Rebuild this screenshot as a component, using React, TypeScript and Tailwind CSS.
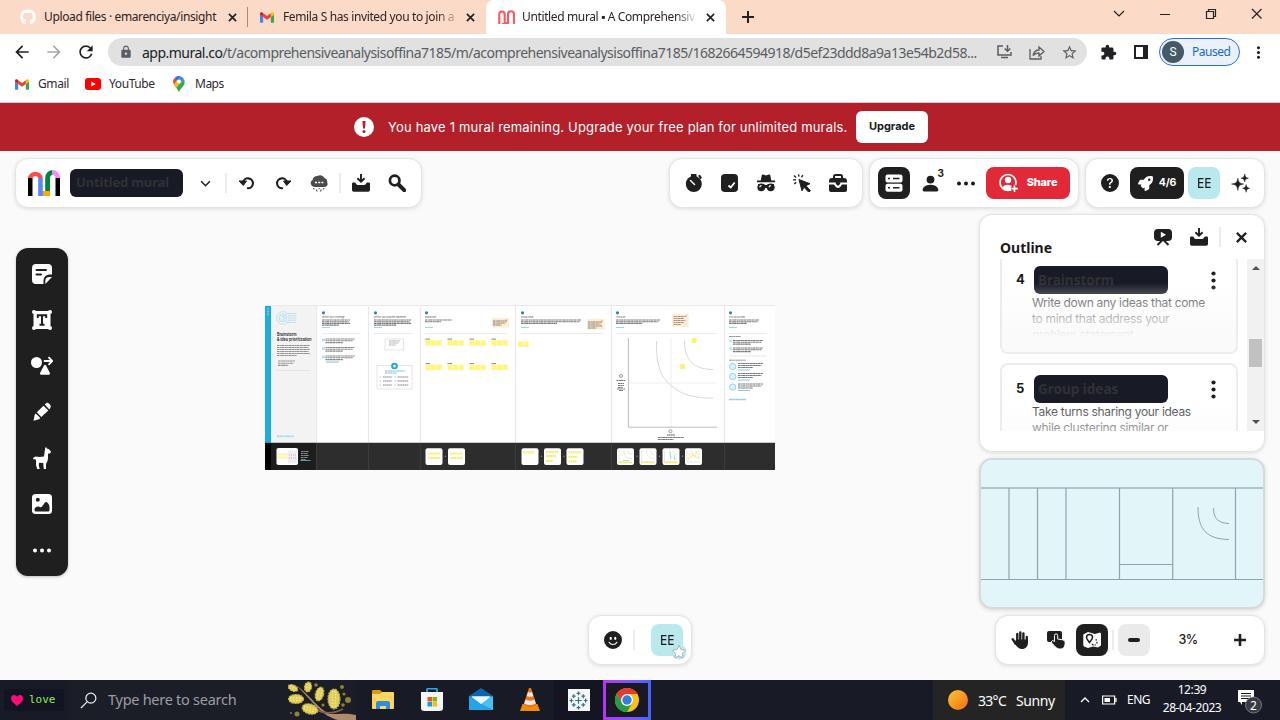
import React from "react";
import { FaGithub, FaRocket } from "react-icons/fa";
import { MdArrowBack, MdArrowForward, MdRefresh, MdLock, MdExtension, MdStarBorder, MdMoreVert } from "react-icons/md";
import { BsPersonFill, BsQuestionCircleFill, BsEmojiSmileFill } from "react-icons/bs";

type P = { className?: string };
const card = "bg-white rounded-[13px] border border-[#e4e4e4] shadow-[0_1px_4px_rgba(0,0,0,0.12)]";

const Gmail = ({ className }: P) => (
  <svg viewBox="0 0 16 12" className={className}>
    <path d="M1 12h2.6V5.2L0 2.7V11a1 1 0 0 0 1 1z" fill="#4285f4" />
    <path d="M12.4 12H15a1 1 0 0 0 1-1V2.7l-3.6 2.5z" fill="#34a853" />
    <path d="M12.4 1v4.4L16 2.7V1.6C16 .2 14.4-.5 13.300.3z" fill="#fbbc04" />
    <path d="M3.600 5.400V1L8 4.300 12.400 1v4.400L8 8.700z" fill="#ea4335" />
    <path d="M0 1.600v1.100l3.600 2.700V1L2.700.3C1.600-.5 0 .2 0 1.600z" fill="#c5221f" />
  </svg>
);
const MuralTab = () => (
  <svg viewBox="0 0 18 14" className="h-[14px] w-[18px]" fill="none" stroke="#f9595f" strokeWidth="2.100">
    <path d="M1.300 14V4.200a2.700 2.700 0 0 1 5.400 0V13M6.300 13H10V4.200a3 3 0 0 1 6 0V14M4 14h2.700" />
  </svg>
);
const Close = ({ className }: P) => (
  <svg viewBox="0 0 10 10" className={className}><path d="m1 1 8 8M9 1 1 9" stroke="#222" strokeWidth="1.900" /></svg>
);
const Pin = () => (
  <svg viewBox="0 0 12 16" className="h-4 w-3">
    <path d="M6 0a5.700 5.700 0 0 0-4.400 2L4 4.500 8 .4A5.600 5.600 0 0 0 6 0z" fill="#1a73e8" />
    <path d="M1.600 2A5.500 5.500 0 0 0 1 8.500L4 4.500z" fill="#ea4335" />
    <path d="M8 .4 4 4.500l-3 4C1.500 9.600 2.400 10.700 3.200 11.800L11 3.200A5.700 5.700 0 0 0 8 .4z" fill="#4285f4" />
    <path d="M1 8.500c.5 1.100 1.400 2.200 2.200 3.300L8 6.500 4 4.500z" fill="#fbbc04" />
    <path d="M11 3.200 3.200 11.800C4.400 13.400 5 14.500 6 16c1.200-3.500 5.700-6 5.700-10.300 0-.9-.3-1.800-.7-2.500z" fill="#34a853" />
    <circle cx="6" cy="5.600" r="2" fill="#fff" />
  </svg>
);
const MuralLogo = () => (
  <svg viewBox="0 0 32 26" className="h-[26px] w-8">
    <path d="M0 8h4.500v18H0zM27.500 8H32v18h-4.500z" fill="#000" />
    <path d="M0 8a7.500 7.500 0 0 1 14.800 0h-4.600a3 3 0 0 0-5.700 0z" fill="#ff4b4b" />
    <path d="M10.200 8h4.600v13H15v5h-4.800z" fill="#5887ff" />
    <path d="M15 21h7v5h-7z" fill="#ffa800" />
    <path d="M17.200 21V8A7.600 7.600 0 0 1 24.500 0v4.900A3 3 0 0 0 22 8v13z" fill="#00853f" />
    <path d="M24.500 0A7.600 7.600 0 0 1 32 8h-4.500a3 3 0 0 0-3-3.100z" fill="#ff85ff" />
  </svg>
);
const Undo = ({ className }: P) => (
  <svg viewBox="0 0 16 14" className={className}>
    <path d="M4 6.500a5 5 0 1 1 4.800 5.800" fill="none" stroke="#1f1f1f" strokeWidth="2.100" strokeLinecap="round" />
    <path d="M0 5h7.500L4.300 9.500z" fill="#1f1f1f" stroke="#1f1f1f" strokeLinejoin="round" />
  </svg>
);
const Cloud = () => (
  <svg viewBox="0 0 18 18" className="size-[18px]">
    <path d="M4.200 13A3.800 3.800 0 0 1 2.500 6 5 5 0 0 1 7.500 2a5 5 0 0 1 7 2 4 4 0 0 1 2.700 4.500A3 3 0 0 1 14.500 13z" fill="#4c4c4c" />
    <path d="M5 8.500h2M8.200 8.500h2M11.400 8.500h2" stroke="#fff" strokeWidth="1.600" />
    <path d="M3.500 14l.6 1.500M6.500 15.500l.5 2M9 14l.3 1M11 15.500l-.4 2M14 14l-.6 1.500" stroke="#333" />
  </svg>
);
const Download = ({ className }: P) => (
  <svg viewBox="0 0 18 18" className={className} fill="#1f1f1f">
    <path d="M1.500 8.500H3c1 0 1 2.500 2.500 2.500h7c1.500 0 1.500-2.500 2.500-2.500h1.500A1.300 1.300 0 0 1 18 9.800V16a1.800 1.800 0 0 1-1.800 1.800H1.800A1.800 1.800 0 0 1 0 16V9.800a1.300 1.300 0 0 1 1.500-1.300z" />
    <path d="M9 0v7.500M5.400 4.200 9 7.700l3.600-3.500" fill="none" stroke="#1f1f1f" strokeWidth="1.900" />
  </svg>
);
const Search = () => (
  <svg viewBox="0 0 18 18" className="size-[18px]" fill="none" stroke="#1f1f1f">
    <circle cx="6.700" cy="6.500" r="4.800" strokeWidth="2.700" />
    <path d="m10.500 10.500 5.700 5.700" strokeWidth="4" strokeLinecap="round" />
  </svg>
);
const Timer = () => (
  <svg viewBox="0 0 18 20" className="h-5 w-[18px]">
    <circle cx="8.800" cy="11" r="8" fill="#1f1f1f" />
    <path d="M6 1h5.500v3H6zM13 2.800l2-1 2 3-1.500 1.500z" fill="#1f1f1f" />
    <path d="m5.500 7.500 4 4" stroke="#fff" strokeWidth="1.500" strokeLinecap="round" />
  </svg>
);
const Vote = () => (
  <svg viewBox="0 0 18 18" className="size-[18px]">
    <rect width="17" height="18" rx="4" fill="#1f1f1f" />
    <path d="m7.500 11.500 2.200 2 4-5" fill="none" stroke="#fff" strokeWidth="1.800" />
  </svg>
);
const Incognito = () => (
  <svg viewBox="0 0 18 18" className="size-[18px]">
    <path d="m3.700 6.500 1-5q.3-1.500 1.600-1L9 1.400l2.700-.9q1.300-.5 1.600 1l1 5zM0 6.500h18v1.800H0z" fill="#1f1f1f" />
    <path d="M1 10h6.500v1h3v-1H17v2.500a4.200 4.200 0 0 1-7.200 1.600H8.200A4.200 4.200 0 0 1 1 12.500z" fill="#1f1f1f" />
    <circle cx="4.300" cy="13.300" r="3.900" fill="#1f1f1f" /><circle cx="13.700" cy="13.300" r="3.900" fill="#1f1f1f" />
    <path d="M2.800 13.300a1.700 1.700 0 0 1 1.700-1.600M12.200 13.300a1.700 1.700 0 0 1 1.700-1.600" stroke="#fff" strokeWidth="1.300" fill="none" />
  </svg>
);
const Click = () => (
  <svg viewBox="0 0 18 18" className="size-[18px]">
    <path d="m6 5.500 11 4.200-4.200 2 4.700 5-1.800 1.500-4.700-5L9 16.800z" fill="#1f1f1f" stroke="#1f1f1f" strokeLinejoin="round" />
    <path d="M5.500.3 6 2.700M1 1.500l2 2M.2 5.800l2.800.1M1.200 10l2-1.600M9.800 1.200 8.500 3.300" stroke="#1f1f1f" strokeWidth="1.400" />
  </svg>
);
const Toolbox = () => (
  <svg viewBox="0 0 18 18" className="size-[18px]">
    <path d="M5 4.500V2.500A1.500 1.500 0 0 1 6.500 1h5A1.500 1.500 0 0 1 13 2.500v2" fill="none" stroke="#1f1f1f" strokeWidth="2" />
    <path d="M3 4h12a3 3 0 0 1 3 3v1.500H0V7a3 3 0 0 1 3-3zM0 10.500h5L7 13.300q2 1.300 4 0l2-2.800h5V16a2 2 0 0 1-2 2H2a2 2 0 0 1-2-2z" fill="#1f1f1f" />
    <path d="M6.800 8h4.400v1.800L9.700 11.500H8.300L6.800 9.800z" fill="#1f1f1f" />
  </svg>
);
const Outline = () => (
  <svg viewBox="0 0 18 18" className="size-[18px]">
    <rect width="17" height="8" x=".5" y=".5" rx="2" fill="#fff" />
    <rect width="17" height="8" x=".5" y="9.700" rx="2" fill="#fff" />
    <path d="M3 4.500h2M8 4.500h6.500M3 13.700h2M8 13.700h6.500" stroke="#1f1f1f" strokeWidth="1.600" />
  </svg>
);
const ShareIcon = () => (
  <svg viewBox="0 0 20 20" className="size-5">
    <circle cx="9" cy="9.500" r="8" fill="none" stroke="#fff" strokeWidth="1.700" />
    <circle cx="9" cy="7" r="3.200" fill="#fff" />
    <path d="M3.200 15c1.500-4.500 9.500-4.500 11 0-3 4-8 4-11 0z" fill="#fff" />
    <path d="M15.500 12v7M12 15.500h7" stroke="#e22937" strokeWidth="4" />
    <path d="M15.500 12.500v6.500M12.300 15.700h6.500" stroke="#fff" strokeWidth="1.700" />
  </svg>
);
const Sparkles = () => (
  <svg viewBox="0 0 18 18" className="size-[19px]" fill="#1f1f1f" stroke="#1f1f1f" strokeWidth=".5">
    <path d="M6.500 4c.8 4 1.500 4.700 5.500 5.500-4 .8-4.700 1.500-5.500 6C5.700 11 5 10.300.5 9.500 5 8.700 5.700 8 6.500 4zM13 0c.5 2.800 1 3.500 3.500 4-2.500.5-3 1-3.500 3.500C12.500 5 12 4.500 9.500 4 12 3.500 12.500 2.800 13 0zM14.300 10c.4 2.300.9 3 3.300 3.500-2.400.5-2.900 1.200-3.300 3.800-.4-2.600-.9-3.300-3.300-3.800 2.400-.5 2.900-1.200 3.300-3.500z" />
  </svg>
);
const Hand = () => (
  <svg viewBox="0 0 18 18" className="size-[18px]" fill="none" stroke="#1f1f1f" strokeLinecap="round">
    <path d="M6.300 9V3M9.300 9V1.500M12.400 9V2.500" strokeWidth="2.400" />
    <path d="M15.800 10.500V6M4.500 12.500 1.700 8.200" strokeWidth="2.300" />
    <path d="M5 8.500h12v3c0 4-2.500 6.500-6 6.500-3.500 0-5-2-7.500-6z" fill="#1f1f1f" stroke="none" />
  </svg>
);
const Dots = ({ className }: P) => (
  <svg viewBox="0 0 18 5" className={className} fill="currentColor"><circle cx="2" cy="2.500" r="2" /><circle cx="9" cy="2.500" r="2" /><circle cx="16" cy="2.500" r="2" /></svg>
);
const VDots = () => (
  <svg viewBox="0 0 5 18" className="h-[19px] w-[5px]" fill="#1f1f1f"><circle cx="2.500" cy="2" r="2.100" /><circle cx="2.500" cy="9" r="2.100" /><circle cx="2.500" cy="16" r="2.100" /></svg>
);
const Sep = () => <div className="h-5 w-[2px] bg-[#ececec]" />;
const Btn = ({ children, className = "", wide }: { children?: React.ReactNode; className?: string; wide?: boolean }) => (
  <button className={`flex h-8 shrink-0 items-center justify-center ${wide ? "" : "w-8"} ${className}`}>{children}</button>
);

function Tabs() {
  return (
    <div className="flex h-[34px] items-end bg-[#fcdac8] text-[12px] tracking-[-0.37px] text-[#2b2320]">
      <div className="flex h-[34px] w-[248px] items-center pl-[20px]">
        <FaGithub className="size-4 text-white" />
        <span className="ml-2 w-[175px] whitespace-nowrap">Upload files · emarenciya/insight</span>
        <Close className="ml-[9px] size-[9px]" />
        <span className="ml-auto h-5 w-px bg-[#a08c80]" />
      </div>
      <div className="flex h-[34px] w-[238px] items-center pl-3">
        <Gmail className="h-[11px] w-[14px]" />
        <span className="ml-[9px] w-[174px] whitespace-nowrap [mask-image:linear-gradient(to_right,#000_88%,transparent_102%)]">Femila S has invited you to join a</span>
        <Close className="ml-[9px] size-[9px]" />
      </div>
      <div className="flex h-[34px] w-[240px] items-center rounded-t-lg bg-white pl-3">
        <MuralTab />
        <span className="ml-[6px] w-[176px] whitespace-nowrap [mask-image:linear-gradient(to_right,#000_87%,transparent)]">Untitled mural ▪ A Comprehensiv</span>
        <Close className="ml-[8px] size-[9px]" />
      </div>
      <svg viewBox="0 0 12 12" className="mb-[11px] ml-[16px] size-3"><path d="M6 0v12M0 6h12" stroke="#222" strokeWidth="2" /></svg>
      <svg viewBox="0 0 160 16" className="mb-[12px] ml-[353px] h-4 w-[160px]" fill="none" stroke="#222" strokeWidth="1.200">
        <path d="m7 5 5 5 5-5M53 8.500h10M99.500 5.500h7v7h-7zM101.500 5.500v-2h7v7h-2M145 3l9.500 9.500M154.500 3 145 12.500" />
      </svg>
    </div>
  );
}

function Address() {
  return (
    <>
      <div className="flex h-9 items-center bg-white text-[#202124]">
        <MdArrowBack className="ml-[12px] size-5" />
        <MdArrowForward className="ml-[12px] size-5 text-[#a8a8a8]" />
        <MdRefresh className="ml-[12px] size-5" />
        <div className="ml-3 flex h-7 w-[979px] items-center rounded-full bg-[#e1e1e1] text-[#5a5d61]">
          <MdLock className="ml-[11px] size-[14px]" />
          <span className="ml-[9px] w-[842px] whitespace-nowrap text-[14px] tracking-[-0.51px]"><span className="text-[#202124]">app.mural.co</span>/t/acomprehensiveanalysisoffina7185/m/acomprehensiveanalysisoffina7185/1682664594918/d5ef23ddd8a9a13e54b2d58...</span>
          <svg viewBox="0 0 15 14" className="ml-[13px] h-[14px] w-[15px]" fill="none" stroke="currentColor" strokeWidth="1.500"><path d="M6 1H1v9h13V7M4 12.500h7M10.500 0v6M7.700 3.500l2.800 2.800 2.800-2.800" /></svg>
          <svg viewBox="0 0 16 15" className="ml-[17px] h-[15px] w-4" fill="none" stroke="currentColor" strokeWidth="1.300"><path d="M1 4v10h11v-3M4 10.500C5 6.500 7 5 10 5V2l5 4.500-5 4.500V8C7.500 8 5.500 8.700 4 10.500z" /></svg>
          <MdStarBorder className="ml-4 size-[17px]" />
        </div>
        <MdExtension className="ml-[13px] size-[17px]" />
        <svg viewBox="0 0 14 14" className="ml-[17px] size-[14px]"><path d="M1 1h12v12H1z" fill="none" stroke="#202124" strokeWidth="2" /><path d="M9 1h4v12H9z" fill="#202124" /></svg>
        <div className="ml-[11px] flex h-7 w-[81px] items-center rounded-full border border-[#2a6fdb] bg-[#eaf1fb] text-[12px] text-[#1967d2]">
          <span className="ml-[2px] flex size-[22px] items-center justify-center rounded-full bg-[#455a64] font-[Roboto] text-[12px] text-white">S</span>
          <span className="ml-[8px] tracking-[-0.5px]">Paused</span>
        </div>
        <MdMoreVert className="ml-[9px] size-[19px]" />
      </div>
      <div className="flex h-[33px] items-center border-b border-[#cfcfcf] bg-white pb-[4px] text-[12px] tracking-[-0.1px] text-[#2b2c2f]">
        <Gmail className="ml-[15px] h-[11px] w-[14px]" /><span className="ml-[9px] w-[38px] tracking-[-0.4px]">Gmail</span>
        <svg viewBox="0 0 16 12" className="ml-[9px] h-3 w-4"><rect width="16" height="12" rx="3" fill="#f00" /><path d="m6.300 3.500 4.400 2.500-4.400 2.500z" fill="#fff" /></svg>
        <span className="ml-[8px] w-[55px] tracking-[-0.4px]">YouTube</span><span className="w-[9px]" /><Pin /><span className="ml-[10px] tracking-[-0.5px]">Maps</span>
      </div>
    </>
  );
}

function Banner() {
  return (
    <div className="flex h-12 shrink-0 items-center bg-[#b3202a] pl-[354px] text-[13px] text-white">
      <svg viewBox="0 0 20 20" className="size-5"><circle cx="10" cy="10" r="10" fill="#fff" /><path d="M8.400 4h3.200l-.6 7.500H9z" fill="#b3202a" /><circle cx="10" cy="14.500" r="1.500" fill="#b3202a" /></svg>
      <span className="ml-[14px] w-[468px] whitespace-nowrap pt-[2px] font-[Inter] tracking-[0.18px]">You have 1 mural remaining. Upgrade your free plan for unlimited murals.</span>
      <button className="h-8 w-[72px] rounded-md bg-white pb-px font-[Inter] text-[11px] font-bold tracking-[0px] text-[#1a1a1a]">Upgrade</button>
    </div>
  );
}

function TopBar() {
  return (
    <div className="mt-[7px] flex h-[50px] gap-[6px] px-[15px]">
      <div className={`flex w-[407px] items-center ${card}`}>
        <div className="ml-[12px]"><MuralLogo /></div>
        <div className="ml-[10px] flex h-7 w-[113px] items-center rounded-md bg-[#181b26] pl-[6px] text-[13px] font-bold tracking-[-0.15px] text-[#303134]">Untitled mural</div>
        <Btn wide className="w-[44px]"><svg viewBox="0 0 12 8" className="h-[7px] w-[11px]"><path d="m1 1.500 5 5 5-5" fill="none" stroke="#1f1f1f" strokeWidth="1.800" /></svg></Btn>
        <span className="-ml-[2px]"><Sep /></span>
        <Btn className="ml-[4px]"><Undo className="h-[14px] w-4" /></Btn>
        <Btn className="ml-[4px]"><Undo className="h-[14px] w-4 -scale-x-100" /></Btn>
        <Btn className="ml-[4px]"><Cloud /></Btn>
        <span className="ml-[4px]"><Sep /></span>
        <Btn className="ml-[4px]"><Download className="size-[18px]" /></Btn>
        <Btn className="ml-[4px]"><Search /></Btn>
      </div>
      <div className={`ml-auto flex w-[194px] items-center justify-between px-[8px] ${card}`}>
        <Btn><Timer /></Btn><Btn><Vote /></Btn><Btn><Incognito /></Btn><Btn><Click /></Btn><Btn><Toolbox /></Btn>
      </div>
      <div className={`flex w-[210px] items-center px-[8px] ${card}`}>
        <Btn className="rounded-lg bg-[#1f1f1f]"><Outline /></Btn>
        <Btn className="relative ml-1"><BsPersonFill className="size-[21px] text-[#1f1f1f]" /><span className="absolute right-[2px] -top-px font-[Inter] text-[10px] font-bold">3</span></Btn>
        <Btn className="ml-1"><Dots className="h-[5px] w-[18px]" /></Btn>
        <Btn wide className="ml-1 w-[84px] rounded-lg bg-[#e22937] text-white"><ShareIcon /><span className="ml-[8px] pb-px font-[Inter] text-[11px] font-extrabold tracking-[-0.2px]">Share</span></Btn>
      </div>
      <div className={`flex w-[180px] items-center px-[8px] ${card}`}>
        <Btn><BsQuestionCircleFill className="size-[18px] text-[#1f1f1f]" /></Btn>
        <Btn wide className="ml-1 w-[54px] rounded-lg bg-[#1f1f1f] text-white"><FaRocket className="size-[15px]" /><span className="ml-[6px] pb-px font-[Inter] text-[10.500px] font-bold tracking-[-0.2px]">4/6</span></Btn>
        <Btn className="ml-1 rounded-lg bg-[#b9e8ed] pb-[2px] text-[15px] tracking-[-0.3px]"><span className="scale-x-90">EE</span></Btn>
        <Btn className="ml-1"><Sparkles /></Btn>
      </div>
    </div>
  );
}

function SideTools() {
  return (
    <div className="mt-[33px] flex h-[328px] w-[52px] shrink-0 flex-col items-center gap-[14px] rounded-xl bg-[#1f1f1f] pt-[10px] text-white shadow-[0_1px_3px_rgba(0,0,0,.25)]">
      <Btn><svg viewBox="0 0 20 20" className="size-5"><path d="M4 0h12a4 4 0 0 1 4 4v6.500h-2.500a6 6 0 0 0-6 6V20H4a4 4 0 0 1-4-4V4a4 4 0 0 1 4-4zM13.300 20v-3a4 4 0 0 1 4-4H20z" fill="#fff" /><path d="M4.500 6h9.500M4.500 10.500h4.500" stroke="#1f1f1f" strokeWidth="2" strokeLinecap="round" /></svg></Btn>
      <Btn><svg viewBox="0 0 20 20" className="size-5"><path d="M1.500 1h17v18h-17z" fill="#fff" /><g fill="#fff"><circle cx="2" cy="2" r="2" /><circle cx="18" cy="2" r="2" /><circle cx="2" cy="18" r="2" /><circle cx="18" cy="18" r="2" /></g><path d="M5.800 8V5.300h8.400V8M10 5.300v9M7.500 14.700h5" fill="none" stroke="#1f1f1f" strokeWidth="2" /></svg></Btn>
      <Btn><svg viewBox="0 0 22 20" className="h-5 w-[22px]"><circle cx="5.500" cy="6.500" r="5.500" fill="#fff" /><path d="M14 10 17.800 17.500h-7.600z" fill="#fff" stroke="#fff" strokeWidth="2.500" strokeLinejoin="round" /><path d="M12.800 5H21M17.500 1.200 21.200 5l-3.700 3.800" fill="none" stroke="#fff" strokeWidth="1.800" /></svg></Btn>
      <Btn><svg viewBox="0 0 20 20" className="size-5"><path d="M4.800 10.200 11.500 3.700l4.800 4.800-7 6.500z" fill="#fff" /><path d="M12.700 2.600 14.500 1c1.500-1 5 2.300 4.200 4.200l-1.300 2.200zM3.700 11.400l4.600 4.700-1.300 1.200-5.500 1.500L2.700 12.800z" fill="#fff" /></svg></Btn>
      <Btn><svg viewBox="0 0 18 22" className="h-[22px] w-[18px]" fill="#fff"><path d="M12.200 1 13 0l1 1.500 2 .8 2 2.500-.7 1.500-2.300.4c-.1 3 .4 5.500-.8 8L13 17v5h-2.200l-.6-6-4-.2-.5 2.200 1 4H4.200L3 18v-4.500l-.7-1.500L.5 12.500 0 11l2.500-1.500 4 .6 4.500-.6z" /></svg></Btn>
      <Btn><svg viewBox="0 0 20 20" className="size-5"><rect width="20" height="20" rx="3.500" fill="#fff" /><circle cx="5.800" cy="5.800" r="2" fill="#1f1f1f" /><path d="M2.500 16c0-3.500 3.500-4.500 6-2.800C10.500 14 12 7.500 14.500 8c1.500.5 3 3 3 5v3q0 1.500-1.500 1.500H4q-1.500 0-1.500-1.500z" fill="#1f1f1f" /></svg></Btn>
      <Btn><Dots className="h-[5px] w-[18px]" /></Btn>
    </div>
  );
}

/* Board preview: all coordinates are page coordinates inside the 265..775 x 305..470 board. */
const Lines = ({ x, y, w, n, c = "#555", s = 2 }: { x: number; y: number; w: number; n: number; c?: string; s?: number }) => (
  <g stroke={c} strokeWidth="1.100" strokeDasharray="2.200 .35 1.300 .3 3 .4" opacity=".8">
    {Array.from({ length: n }, (_, i) => <path key={i} d={`M${x} ${y + i * s}h${i === n - 1 ? w * 0.6 : w - (i % 2) * 1.5}`} />)}
  </g>
);
const Notes = ({ x, y, n = 3 }: { x: number; y: number; n?: number }) => (
  <g fill="#fff67c">{Array.from({ length: n }, (_, i) => <rect key={i} x={x + i * 5.5} y={y} width="5.100" height="5.300" />)}</g>
);
function Board() {
  const heads: [number, string, number, number, number][] = [
    [322, "Define your challenge", 28, 4, 38], [374, "Define your problem statement", 37, 4, 38], [425, "Brainstorm", 27, 2, 82],
    [521, "Group ideas", 60, 3, 82], [616, "Prioritize", 44, 3, 100], [729, "Pick up an idea", 30, 3, 38],
  ];
  return (
    <svg viewBox="265 305 510 165" className="h-[165px] w-[510px]">
      <path d="M265 305h510v165H265z" fill="#fff" />
      <path d="M265 305h6v138h-6z" fill="#1fabdc" /><path d="M271 305h45.500v138H271z" fill="#f3f3f4" />
      <path d="M268 308v8" stroke="#a7e2f4" strokeDasharray="1 .5" />
      <path d="M316.500 305v138M368.500 305v138M420.300 305v138M515.500 305v138M611.500 305v138M724.500 305v138M265 305.300h510" stroke="#e9e9e9" strokeWidth="1.200" />
      <path d="M265 442.800h510V470H265z" fill="#2d2d2d" /><path d="M271 443h45.500v27H271z" fill="#1d1d1d" /><path d="M265 443h6v27h-6z" fill="#000" />
      <path d="M316.500 443v27M368.500 443v27M420.300 443v27M515.500 443v27M611.500 443v27M724.500 443v27" stroke="#3d3d3d" />
      <g fill="none" stroke="#aed8ed" strokeWidth=".7"><circle cx="283" cy="318" r="6.300" /><circle cx="283" cy="318" r="4" fill="#e2f1f8" /><path d="M287 313.500h9M289.500 315.700h7M289.500 318h7M289 320.200h7M287 322.500h9M282 316l3 1-2 4" /></g>
      <g className="font-[Inter]" fill="#222" fontSize="4.300" fontWeight="600"><text x="277" y="335.500" textLength="19.500" lengthAdjust="spacingAndGlyphs">Brainstorm</text><text x="277" y="340.600" textLength="34.500" lengthAdjust="spacingAndGlyphs">&amp; idea prioritization</text></g>
      <Lines x={277} y={345.500} w={33} n={6} c="#777" />
      <Lines x={278} y={361} w={17} n={3} s={2.200} c="#777" />
      <path d="M277 370.500h33" stroke="#dedede" strokeWidth=".7" /><path d="M277 436.200h17" stroke="#b5e0f1" strokeWidth="2" strokeDasharray="2 .3 4 .3" />
      {heads.map(([x, t, w, n, r]) => (
        <g key={x}>
          <circle cx={x + 1.5} cy="312.800" r="1.600" fill="#2489a8" />
          <text x={x} y="318" fontSize="2.200" fill="#555" className="font-[Inter]">{t}</text>
          <Lines x={x} y={320} w={w} n={n} c="#555" s={1.7} />
          <path d={`M${x} 327.500h8`} stroke="#9fd5e7" />
          <path d={`M${x} 333.500h${r}`} stroke="#dedede" strokeWidth=".6" />
        </g>
      ))}
      {[339, 347.500, 356].map((y) => <g key={y}><path d={`M322 ${y + 1}h3`} stroke="#b6dfec" strokeWidth="2.500" /><Lines x={325.500} y={y} w={29} n={3} s={1.8} c="#666" /></g>)}
      <path d="M326 362h13" stroke="#a5d8ed" strokeWidth="1.500" />
      <g fill="#fff" stroke="#dadada" strokeWidth=".7"><path d="M385 339h18.500v11H385zM377 365.500h35v23.500h-35z" /></g>
      <Lines x={389} y={341} w={11} n={3} c="#999" /><circle cx="394.500" cy="366" r="3.300" fill="#24a5ce" /><circle cx="394.500" cy="366" r="1.500" fill="#d6f2f9" />
      <Lines x={385} y={371} w={20} n={2} c="#66acc5" />
      {[377, 381, 385].map((y) => <g key={y} stroke="#888" strokeDasharray="1.500 .3"><path d={`M383 ${y}h9M397.500 ${y}h11`} /><path stroke="#9ed4e8" d={`M379.500 ${y}h2M394.500 ${y}h1.500`} /></g>)}
      {[340.300, 364.800].map((y) => [425.500, 447.500, 469.500, 491.500].map((x) => <g key={`${x}${y}`}><Notes x={x} y={y} /><path d={`M${x} ${y - 1.2}h4.500`} stroke="#666" strokeWidth=".8" /></g>))}
      <Notes x={518} y={341.500} n={2} />
      <g fill="#feecd5"><path d="M492 318h17v9.500h-17zM587 319h17.500v10.500H587zM672 314h16.500v13H672z" /></g>
      <Lines x={493} y={321} w={14} n={3} c="#6d6156" /><Lines x={588} y={322} w={14} n={4} c="#6d6156" /><Lines x={673.500} y={316.500} w={12} n={5} c="#8a7c6d" />
      <g fill="#f58c6c"><circle cx="506" cy="320" r=".7" /><circle cx="602" cy="321" r=".7" /><circle cx="686" cy="316" r=".7" /></g>
      <path d="M671 338v89M629 383h87" stroke="#eee" fill="none" /><path d="M628.400 338v89.200H717" stroke="#a9a9a9" fill="none" strokeWidth=".8" />
      <path d="M656.500 341C656 368 662 379 673 387c10 8 19 10.500 40 11.200M684.500 341c0 19 9 28.500 28.500 28.500" fill="none" stroke="#d3d3d3" strokeWidth=".9" />
      <g fill="#fff07b"><path d="M691.700 338h5v5h-5zM680 364h5v5h-5z" /></g>
      <g fill="none" stroke="#9898a6"><circle cx="621" cy="376" r="1.500" /><circle cx="670.500" cy="431.300" r="1.500" /></g>
      <path d="M616.500 380.500h9M618 383.500h6M618 385.500h6M618 387.500h5M617 389h8M619 390.500h4" stroke="#666" strokeWidth=".9" strokeDasharray="2 .3" /><Lines x={658} y={437.500} w={26} n={2} /><path d="M667 435h8" stroke="#555" strokeDasharray="1.500 .3" />
      <path d="M729 336.500h12M729 360.200h17" stroke="#777" strokeWidth=".8" strokeDasharray="2 .3" /><path d="M729 356h38" stroke="#ddd" strokeWidth=".7" />
      {[341, 348.500].map((y) => <g key={y}><path d={`M729.500 ${y}h2.500`} stroke="#afe0ef" strokeWidth="2.500" /><Lines x={733} y={y - 0.5} w={30} n={3} s={1.8} /></g>)}
      {[366.500, 376.500, 387].map((y) => <g key={y}><circle cx="732.700" cy={y} r="3.200" fill="#d8f0f8" stroke="#7fc6de" strokeWidth=".7" /><Lines x={738} y={y - 3} w={25} n={3} /><path d={`M738 ${y + 3.5}h12`} stroke="#86cbe3" /></g>)}
      <path d="M729 399.500h17" stroke="#8ccde3" strokeWidth="1.500" strokeDasharray="2 .3" />
      <rect x="276.500" y="448" width="21.500" height="17" rx="1.800" fill="#fff" /><path d="M287.800 450.500h9v13h-9z" fill="#efefef" />
      <path d="M277.500 454.500h10M277.500 457.500h10" stroke="#fff28a" strokeWidth="2" strokeDasharray="1.800 .4" /><path d="M289 455h7M289 458h7" stroke="#cfa4c6" strokeDasharray="1 1" />
      <Lines x={301} y={451.500} w={8} n={5} c="#aaa" /><path d="M300.500 460.500h10" stroke="#5b96ac" />
      {[425.500, 448, 521.500, 544, 566.500, 617, 639.500, 662.500, 685].map((x, i) => (
        <g key={x}>
          <rect x={x} y="448.200" width="17" height="16.800" rx="2" fill="#fff" />
          {i < 5 ? <path d={i === 2 ? `M${x + 2} 452.200h11` : i === 3 ? `M${x + 2} 452h12M${x + 2} 456h10M${x + 2} 461h7` : i === 4 ? `M${x + 2} 452.300h13M${x + 2} 457h9M${x + 2} 461.500h9` : `M${x + 2.5} 453.500h12M${x + 2.5} 458h12`} stroke="#f8ec6c" strokeWidth="2" strokeDasharray="1.700 .4" />
            : <g fill="none"><path d={`M${x + 2} 450.500v11.500h13M${x + 7} 450.500c0 6 3 8 8 8M${x + 11} 450.500q0 4 4 4`} stroke="#ddd" strokeWidth=".7" /><path d={i === 8 ? `M${x + 3} 459l11-8M${x + 4} 454l10 3` : `M${x + 2} 462.500h13`} stroke="#f6e967" strokeWidth="1.600" strokeDasharray={i === 8 ? "1.600 1.500" : "3 .3"} />{(i === 5 || i === 7) && <path d={i === 5 ? `M${x + 6} 460.500h6` : `M${x + 8} 452v7M${x + 12} 455v5`} stroke="#9cdced" />}</g>}
          {![1, 4, 8].includes(i) && <circle cx={x + 20} cy="456.300" r=".7" fill="#888" />}
        </g>
      ))}
    </svg>
  );
}

function Step({ n, title, lines, className, fade }: { n: string; title: string; lines: string[]; className: string; fade: string }) {
  return (
    <div className={`relative h-[100px] w-[238px] shrink-0 overflow-hidden rounded-lg border-2 border-[#ececec] bg-white pt-[10px] ${className}`}>
      <div className="flex h-7 items-center pl-[14px]">
        <span className="w-[18px] font-[Inter] text-[13px] font-bold">{n}</span>
        <span className="flex h-7 w-[134px] items-center rounded-md bg-[#181b26] pl-[4px] text-[13.5px] font-bold text-[#303134]">{title}</span>
        <span className="ml-[43px]"><VDots /></span>
      </div>
      <div className="ml-[30px] mt-px font-[Inter] text-[12px] leading-4 tracking-[-0.3px] text-[#3c3c3c]">{lines.map((l) => <div key={l} className="whitespace-nowrap">{l}</div>)}</div>
      <div className={`absolute inset-x-0 bottom-0 bg-[linear-gradient(to_bottom,rgba(250,250,250,0)_0,#fafafa_54px)] ${fade}`} />
    </div>
  );
}

function RightPanel() {
  return (
    <div className="ml-auto flex w-[286px] shrink-0 flex-col items-end">
      <div className={`-mt-px h-[238px] w-[286px] overflow-hidden ${card}`}>
        <div className="flex h-[44px] items-center pl-[20px]">
          <h2 className="mt-[21px] w-[147px] text-[14px] font-bold">Outline</h2>
          <Btn><svg viewBox="0 0 18 18" className="size-[18px]"><rect y="1" width="18" height="12" rx="4" fill="#1f1f1f" /><path d="m6.800 3.800 5.200 3-5.200 3z" fill="#fff" /><path d="m8.500 12-5 5M9.500 12l5 5" stroke="#1f1f1f" strokeWidth="2" /></svg></Btn>
          <Btn className="ml-1"><Download className="size-[18px]" /></Btn>
          <span className="ml-1"><Sep /></span>
          <Btn className="ml-[4px]"><svg viewBox="0 0 10 10" className="size-[11px]"><path d="m.8.8 8.400 8.400M9.200.8.8 9.200" stroke="#1f1f1f" strokeWidth="2" /></svg></Btn>
        </div>
        <div className="flex h-[172px] justify-between overflow-hidden pl-[20px]">
          <div className="flex flex-col">
            <Step n="4" title="Brainstorm" lines={["Write down any ideas that come", "to mind that address your", "problem statement."]} className="-mt-[5px]" fade="top-[27px]" />
            <Step n="5" title="Group ideas" lines={["Take turns sharing your ideas", "while clustering similar or"]} className="mt-[9px]" fade="top-[37px]" />
          </div>
          <div className="flex w-[17px] flex-col items-center bg-[#f1f1f1] py-[6px]">
            <svg viewBox="0 0 8 5" className="h-[5px] w-2"><path d="m0 5 4-4 4 4z" fill="#505050" /></svg>
            <div className="mt-[69px] h-7 w-[13px] bg-[#c1c1c1]" />
            <svg viewBox="0 0 8 5" className="mt-auto h-[5px] w-2"><path d="m0 0 4 4 4-4z" fill="#505050" /></svg>
          </div>
        </div>
      </div>
      <div className="mt-[6px] h-[151px] w-[286px] overflow-hidden rounded-[13px] border-2 border-[#d5dbdc] bg-[#e2f5f8] shadow-[0_1px_4px_rgba(0,0,0,.15)]">
        <svg viewBox="981 460 282 147" className="h-[147px] w-[282px]" fill="none" stroke="#8fa5a9">
          <path d="M981 488h282" stroke="#b1c6c9" strokeWidth="2" /><path d="M981 579.500h282M1009 488v91.500M1037.500 488v91.500M1066 488v91.500M1119.500 488v91.500M1172.700 488v91.500M1235.500 488v91.500M1119.500 564.500h53" strokeWidth="1.200" />
          <path d="M1198 507c0 23 9 32 31 32.500M1213.500 508c0 11 5 15 15.500 15.500" />
        </svg>
      </div>
      <div className={`mt-[6px] flex h-[50px] w-[270px] items-center pl-[8px] ${card}`}>
        <Btn><Hand /></Btn>
        <Btn className="ml-1"><svg viewBox="0 0 18 18" className="size-[18px]"><path d="M2 0h11q2 0 2 2v9H2q-2 0-2-2V2q0-2 2-2z" fill="#1f1f1f" /><path d="m4 11 1.500-1.500 2 1V4.500a1.600 1.600 0 0 1 3.200 0V8l5 .8q2.500.5 2.500 2.700c0 4-1.700 6.500-5 6.500-3.200 0-4.500-1.500-9.200-7z" fill="#1f1f1f" stroke="#fff" strokeWidth="1" /></svg></Btn>
        <Btn className="ml-1 rounded-lg bg-[#1f1f1f]"><svg viewBox="0 0 18 16" className="h-4 w-[18px]"><path d="M2 1.500 5 0l7 2 5-1.500 1 1v12L15 15.500l-5-1-5 1.500-4-1.500-.7-1V2.500z" fill="#fff" /><path d="M6.500 10.500C5 8.500 3.500 7 3.500 5.500a3 3 0 0 1 6 0c0 1.500-1.500 3-3 5z" fill="none" stroke="#1f1f1f" strokeWidth="1.500" /><path d="M9 12q3 3 5-1l-1-4" fill="none" stroke="#1f1f1f" strokeWidth="1.200" strokeDasharray="1.600 1.300" /></svg></Btn>
        <span className="ml-[4px]"><Sep /></span>
        <Btn className="ml-[4px] rounded-lg bg-[#eaeaea]"><span className="h-1 w-3 rounded-sm bg-[#1f1f1f]" /></Btn>
        <span className="ml-[12px] w-[52px] text-center font-[Inter] text-[12.500px] font-medium tracking-[-0.7px]">3%</span>
        <Btn className="ml-[10px]"><svg viewBox="0 0 12 12" className="size-3"><path d="M6 0v12M0 6h12" stroke="#1f1f1f" strokeWidth="2.600" /></svg></Btn>
      </div>
    </div>
  );
}

function Workspace() {
  return (
    <main className="flex h-[529px] shrink-0 flex-col bg-[#fafafa]">
      <TopBar />
      <div className="mt-[7px] flex px-[15px] pl-4">
        <SideTools />
        <div className="flex w-[800px] flex-col pt-[90px]">
          <div className="ml-[197px]"><Board /></div>
          <div className={`ml-[520px] mt-[145px] flex h-[50px] w-[104px] items-center ${card}`}>
            <Btn className="ml-[8px]"><BsEmojiSmileFill className="size-[18px] text-[#1f1f1f]" /></Btn>
            <span className="ml-[4px]"><Sep /></span>
            <Btn className="relative ml-[16px] rounded-lg bg-[#b9e8ed] pb-[2px] text-[15px] tracking-[-0.3px]"><span className="scale-x-90">EE</span>
              <svg viewBox="0 0 16 16" className="absolute -bottom-[4px] -right-[4px] size-4"><circle cx="8" cy="8" r="7.500" fill="#b9e8ed" /><path d="m8 1.500 2 4 4.500.7-3.200 3.200.8 4.500L8 11.800l-4.100 2.100.8-4.500L1.500 6.200 6 5.500z" fill="#fff" stroke="#999" strokeWidth=".7" /></svg>
            </Btn>
          </div>
        </div>
        <RightPanel />
      </div>
    </main>
  );
}

const catkins: [number, number, number, number, number][] = [[5, 8, 5, 3, 25], [20, 7, 3.5, 5, 10], [8, 19, 7.5, 4.5, 0], [31.500, 14, 4, 7, 15], [46, 19, 6, 10, 0], [22, 29, 8, 5, 15]];
const Blossom = () => (
  <svg viewBox="0 0 68 40" className="h-10 w-[68px]">
    <path d="M8 5C22 15 31 30 42 34c9 0 18-1 26 1v5H50C34 36 26 23 8 5z" fill="#b08a6c" /><path d="M27 29c10 6 20 4 28 0" fill="none" stroke="#80614d" strokeWidth="1.500" />
    {catkins.map(([x, y, rx, ry, a]) => (
      <g key={x} transform={`rotate(${a} ${x} ${y})`}>
        <ellipse cx={x} cy={y} rx={rx} ry={ry} fill="#dfcd5c" stroke="#c4b03f" strokeWidth="1.200" strokeDasharray="2 1" />
        <path d={rx > ry ? `M${x - rx + 1.5} ${y - 1}h${2 * rx - 3}M${x - rx + 2} ${y + 1.5}h${2 * rx - 4}` : `M${x - 1.5} ${y - ry + 2}v${2 * ry - 4}M${x + 1.5} ${y - ry + 2}v${2 * ry - 4}`} stroke="#f4e88f" strokeWidth="1.300" strokeDasharray="1.400 1.500" />
      </g>
    ))}
    <g fill="#8f8137"><circle cx="28" cy="5" r="1.800" /><circle cx="54" cy="7" r="2" /><circle cx="56" cy="14" r="1.600" /><circle cx="60" cy="20" r="3" /><circle cx="9" cy="34" r="2.500" /><circle cx="3" cy="33" r="1" /><circle cx="55" cy="25" r="1.800" /><circle cx="35" cy="25" r="1.500" /></g>
  </svg>
);

function Taskbar() {
  return (
    <footer className="flex h-10 shrink-0 items-center overflow-hidden bg-[#181b26] text-white">
      <div className="ml-1 flex h-[22px] w-[60px] items-center rounded-sm bg-[#111421] pl-[7px]">
        <svg viewBox="0 0 12 11" className="h-[11px] w-3"><path d="M6 11C2 8 0 6 0 3.300 0 0 4-1.200 6 1.800 8-1.200 12 0 12 3.300 12 6 10 8 6 11z" fill="#ff0a78" /></svg>
        <span className="ml-[6px] font-['DejaVu_Sans_Mono'] text-[11px] text-[#8fee56]">love</span>
      </div>
      <div className="ml-1 flex h-10 w-[288px] items-center bg-[#1b1e27]">
        <svg viewBox="0 0 17 18" className="ml-3 h-[17px] w-[17px]" fill="none" stroke="#eee" strokeWidth="1.300"><circle cx="11" cy="6.500" r="5.300" /><path d="m7 10.500-6.500 6.500" /></svg>
        <span className="ml-[11px] w-[180px] whitespace-nowrap text-[14.500px] tracking-[-0.27px] text-[#9c9da3]">Type here to search</span>
        <Blossom />
      </div>
      <div className="flex h-10 w-[53px] items-center justify-center"><svg viewBox="0 0 22 20" className="h-5 w-[22px]"><path d="M0 1q0-1 1-1h7l2 2v4H0z" fill="#d99a13" /><path d="M0 4h8l2-2h11q1 0 1 1v15q0 1-1 1H1q-1 0-1-1z" fill="#ffd461" /><path d="M4 19v-6q0-2 2-2h10q2 0 2 2v6h-4v-3H8v3z" fill="#2f8edb" /></svg></div>
      <div className="flex h-10 w-[45px] items-center justify-center"><svg viewBox="0 0 22 24" className="h-6 w-[22px]"><path d="M6 5V2q0-1.500 1.500-1.500h7Q16 .5 16 2v3" fill="none" stroke="#29a9e8" strokeWidth="1.800" /><path d="M0 4h22v16q0 3-3 3H3q-3 0-3-3z" fill="#f5f5f5" /><path d="M6.500 9H11v4.500H6.500z" fill="#f25022" /><path d="M11.500 9H16v4.500h-4.500z" fill="#7fba00" /><path d="M6.500 14H11v4.500H6.500z" fill="#00a4ef" /><path d="M11.500 14H16v4.500h-4.500z" fill="#ffb900" /></svg></div>
      <div className="ml-[2px] flex h-10 w-[49px] items-center justify-center"><svg viewBox="0 0 24 24" className="size-6"><path d="M0 8 12 0l12 8v14H0z" fill="#0b65ac" /><path d="M3 8.500h18L12 17z" fill="#e9f4fb" /><path d="M0 8l24 14H0z" fill="#25a5e6" /><path d="M24 8v14L11 15z" fill="#48c2f4" /><path d="M2 8.500h20L12 16z" fill="#eef7fc" /></svg></div>
      <div className="flex h-10 w-[49px] items-center justify-center"><svg viewBox="0 0 20 24" className="h-6 w-5"><path d="M2.500 16h15l2.500 7H0z" fill="#f28a10" /><path d="M9 0h2l5.500 17q-6.500 4-13 0z" fill="#ee7512" /><path d="m8 4-1.300 4q3.500 1.700 6.600 0L12 4q-2 1-4 0zM5.500 11.500 4.200 15.500q6 3 11.600 0l-1.300-4q-4.500 2.500-9 0z" fill="#e8e8e8" /></svg></div>
      <div className="flex h-10 w-[49px] items-center justify-center bg-[#131622]"><div className="flex size-[22px] items-center justify-center bg-[#f5f7f8]"><svg viewBox="0 0 20 20" className="size-[19px]" fill="none" stroke="#376c94" strokeWidth="1.300"><path d="M10 6.500v7M6.500 10h7M10 .5v4M8 2.500h4M10 15.500v4M8 17.500h4M.5 10h4M2.500 8v4M15.500 10h4M17.500 8v4M5 3.500v4M3 5.500h4M15 3.500v4M13 5.500h4M5 12.500v4M3 14.500h4M15 12.500v4M13 14.500h4" /></svg></div></div>
      <div className="h-10 w-12 bg-linear-to-r from-[#b832f4] to-[#3d64ff] p-[3px]"><div className="flex h-full items-center justify-center bg-[#181925]"><svg viewBox="0 0 24 24" className="size-6"><circle cx="12" cy="12" r="12" fill="#fbc116" /><path d="M1.600 6A12 12 0 0 1 22.400 6H12L6.800 15z" fill="#e53a2e" /><path d="M1.600 6A12 12 0 0 0 12 24l5.200-9L12 18l-5.200-3z" fill="#269b49" /><circle cx="12" cy="12" r="6" fill="#fff" /><circle cx="12" cy="12" r="4.700" fill="#367de2" /></svg></div></div>
      <div className="ml-auto flex h-10 w-[132px] items-center bg-[#242424] pl-[15px] text-[14px]"><span className="size-5 rounded-full bg-linear-to-br from-[#fac635] to-[#f16a10]" /><span className="ml-[10px] w-[38px] tracking-[-0.7px]">33°C</span><span className="tracking-[-0.4px]">Sunny</span></div>
      <div className="flex h-10 w-[215px] items-center text-[12px]">
        <svg viewBox="0 0 10 6" className="ml-[15px] h-[6px] w-[10px]"><path d="m1 5 4-4 4 4" fill="none" stroke="#fff" strokeWidth="1.300" /></svg>
        <svg viewBox="0 0 15 10" className="ml-[12px] h-[10px] w-[15px]"><path d="M.6 1h12v8H.6zM14 3v4" fill="none" stroke="#fff" strokeWidth="1.200" /><path d="M2.500 3H8v4H2.500z" fill="#fff" /></svg>
        <span className="ml-[10px] w-[27px] tracking-[-0.5px]">ENG</span>
        <div className="ml-[5px] flex w-[66px] flex-col items-center pb-[2px] leading-[18px] tracking-[-0.4px]"><span>12:39</span><span className="whitespace-nowrap">28-04-2023</span></div>
        <svg viewBox="0 0 26 26" className="ml-[13px] mt-[2px] size-[26px]"><path d="M0 2h16v12H4v3l-2-3H0z" fill="#fff" /><path d="M3 5.500h10M3 8h10M3 10.500h8" stroke="#181b26" /><circle cx="15.500" cy="17" r="8" fill="#393b42" stroke="#888" strokeWidth=".8" /><text x="12" y="21.500" fontSize="12" fill="#fff">2</text></svg>
      </div>
    </footer>
  );
}

export default function App() {
  return (
    <div className="flex h-[720px] w-[1280px] flex-col overflow-hidden bg-white font-['Noto_Sans',sans-serif] text-[#1a1a1a]">
      <Tabs /><Address /><Banner /><Workspace /><Taskbar />
    </div>
  );
}
